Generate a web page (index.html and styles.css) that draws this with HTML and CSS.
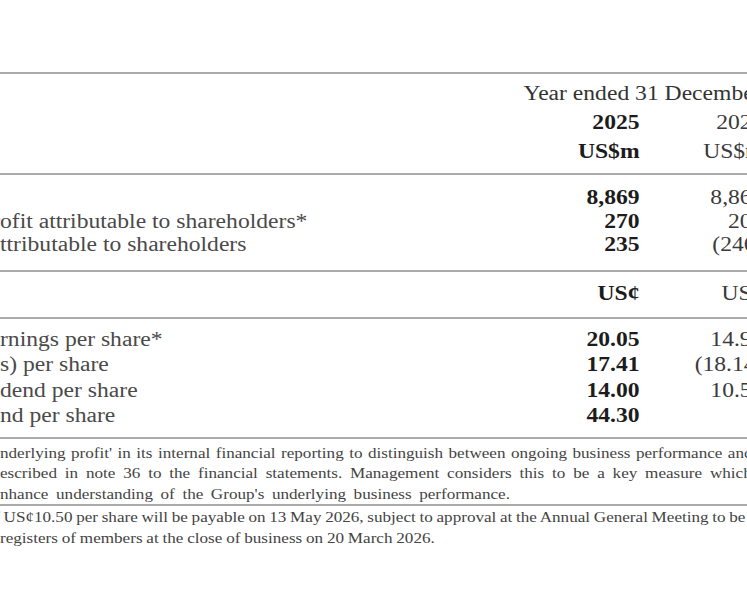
FILE: index.html
```html
<!DOCTYPE html>
<html lang="en">
<head>
<meta charset="utf-8">
<title>Financial highlights</title>
<link rel="stylesheet" href="styles.css">
</head>
<body>
<div class="page">
  <section class="block head">
    <div class="row"><span class="label"></span><span class="span2">Year ended 31 December</span></div>
    <div class="row"><span class="label"></span><span class="num cur">2025</span><span class="num">2024</span></div>
    <div class="row"><span class="label"></span><span class="num cur">US$m</span><span class="num">US$m</span></div>
  </section>
  <section class="block body1">
    <div class="row"><span class="label"><span class="cut">Revenue</span></span><span class="num cur">8,869</span><span class="num">8,862</span></div>
    <div class="row"><span class="label"><span class="cut">Underlying pr</span>ofit attributable to shareholders*</span><span class="num cur">270</span><span class="num">205</span></div>
    <div class="row"><span class="label"><span class="cut">Profit/(loss) a</span>ttributable to shareholders</span><span class="num cur">235</span><span class="num">(246)</span></div>
  </section>
  <section class="block head2">
    <div class="row"><span class="label"></span><span class="num cur">US¢</span><span class="num">US¢</span></div>
  </section>
  <section class="block body2">
    <div class="row"><span class="label"><span class="cut">Underlying ea</span>rnings per share*</span><span class="num cur">20.05</span><span class="num">14.92</span></div>
    <div class="row"><span class="label"><span class="cut">Basic earnings/(los</span>s) per share</span><span class="num cur">17.41</span><span class="num">(18.14)</span></div>
    <div class="row"><span class="label"><span class="cut">Interim divi</span>dend per share</span><span class="num cur">14.00</span><span class="num">10.50</span></div>
    <div class="row"><span class="label"><span class="cut">Final divide</span>nd per share</span><span class="num cur">44.30</span><span class="num"></span></div>
  </section>
  <section class="block notes">
    <p class="line l1"><span class="cut">* The Group uses 'u</span>nderlying profit' in its internal financial reporting to distinguish between ongoing business performance and</p>
    <p class="line l2"><span class="cut">non-trading items, as more fully d</span>escribed in note 36 to the financial statements. Management considers this to be a key measure which</p>
    <p class="line l3"><span class="cut">provides additional information to e</span>nhance understanding of the Group's underlying business performance.</p>
  </section>
  <section class="block notes2">
    <p class="line l4"><span class="cut">† A final dividend of</span>US¢10.50 per share will be payable on 13 May 2026, subject to approval at the Annual General Meeting to be</p>
    <p class="line l5"><span class="cut">held on 7 May 2026, to shareholders on the </span>registers of members at the close of business on 20 March 2026.</p>
  </section>
</div>
</body>
</html>
```
FILE: styles.css
```css
html, body {
  margin: 0;
  padding: 0;
  background: #ffffff;
}
body {
  width: 747px;
  height: 598px;
  overflow: hidden;
}
.page {
  width: 647px;
  padding-top: 72px;
  transform: scaleX(1.18);
  transform-origin: 0 0;
  font-family: "Liberation Serif", "Times New Roman", serif;
  color: #333;
}
.block {
  border-top: 2px solid #ababab;
}
.row {
  display: grid;
  grid-template-columns: 1fr 100px 105px;
  white-space: nowrap;
  font-size: 20px;
}
.label {
  color: #4a4a4a;
}
.cut {
  display: inline-block;
  width: 300px;
  margin-left: -300px;
  text-align: right;
  white-space: nowrap;
}
.num {
  text-align: right;
  color: #3a3a3a;
}
.num.cur {
  font-weight: bold;
  color: #1c1c1c;
}
.span2 {
  grid-column: 2 / 4;
  text-align: center;
  color: #333;
}
.head {
  padding: 5px 0 7px;
}
.head .row {
  line-height: 29px;
}
.body1 {
  padding: 11px 0 13px;
}
.body1 .row {
  line-height: 23.5px;
}
.head2 {
  padding: 9px 0 12px;
}
.head2 .row {
  line-height: 24px;
}
.body2 {
  padding: 8px 0 8px;
}
.body2 .row {
  line-height: 25.5px;
}
.notes {
  padding-top: 4px;
}
.notes2 {
  padding-top: 1px;
}
.line {
  margin: 0;
  font-size: 14.5px;
  line-height: 20.5px;
  white-space: nowrap;
  color: #444;
}
.l1 {
  word-spacing: 1px;
}
.l2 {
  word-spacing: 3px;
}
.l3 {
  word-spacing: 2.8px;
}
.l4 {
  word-spacing: -0.5px;
}
.l4 .cut {
  margin-right: 3px;
}
.l5 {
  word-spacing: -0.4px;
}
```
